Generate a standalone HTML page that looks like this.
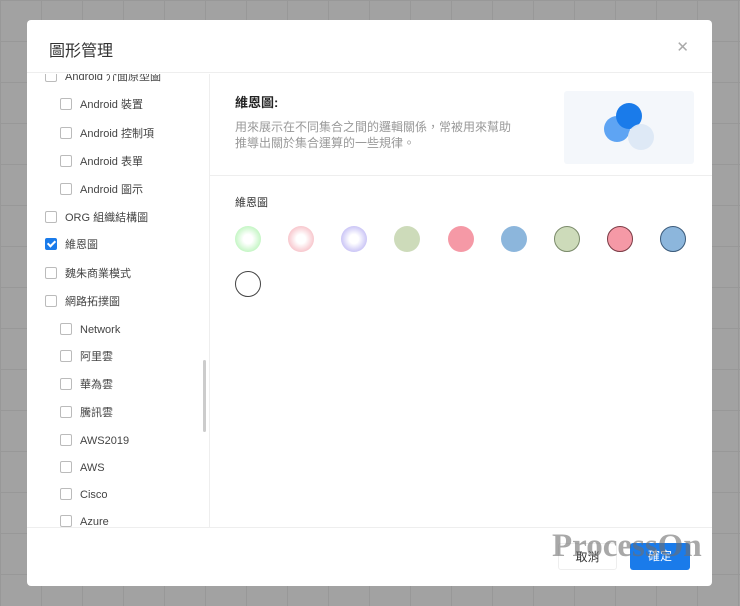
<!DOCTYPE html>
<html><head><meta charset="utf-8"><style>
*{margin:0;padding:0;box-sizing:border-box}
body{width:740px;height:606px;overflow:hidden;background:#a2a2a2;font-family:"Liberation Sans","Noto Sans CJK TC",sans-serif;position:relative;
background-image:linear-gradient(#989898 1px,transparent 1px),linear-gradient(90deg,#989898 1px,transparent 1px);background-size:41px 41px}
.dlg{position:absolute;left:27px;top:20px;width:685px;height:566px;background:#fff;border-radius:4px;overflow:hidden}
.hd{position:absolute;left:0;top:0;width:100%;height:53px;border-bottom:1px solid #eee}
.hd .t{position:absolute;left:22px;top:17px;font-size:16px;color:#333}
.hd .x{position:absolute;right:23px;top:18px;font-size:15px;color:#aaa;font-weight:300}
.left{position:absolute;left:0;top:54px;width:183px;height:453px;border-right:1px solid #eee;overflow:hidden}
.it{position:absolute;font-size:11px;color:#444;height:14px;line-height:14px;white-space:nowrap}
.it i{display:inline-block;width:12px;height:12px;border:1px solid #bbb;border-radius:2px;vertical-align:-2px;margin-right:8px;background:#fff}
.it i.on{background:#1a7bea;border-color:#1a7bea;position:relative}
.it i.on:after{content:"";position:absolute;left:3px;top:0px;width:3px;height:6px;border:solid #fff;border-width:0 2px 2px 0;transform:rotate(45deg)}
.sb{position:absolute;left:176px;top:286px;width:3px;height:72px;background:#ccc;border-radius:2px}
.ft{position:absolute;left:0;top:507px;width:100%;border-top:1px solid #eee;height:60px}
.c{position:absolute;width:26px;height:26px;border-radius:50%}
</style></head><body>
<div class="dlg">
<div class="hd"><div class="t">圖形管理</div><div class="x">✕</div></div>
<div class="left">
<div class="it" style="left:18px;top:-4px"><i></i>Android 介面原型圖</div>
<div class="it" style="left:33px;top:24px"><i></i>Android 裝置</div>
<div class="it" style="left:33px;top:53px"><i></i>Android 控制項</div>
<div class="it" style="left:33px;top:81px"><i></i>Android 表單</div>
<div class="it" style="left:33px;top:109px"><i></i>Android 圖示</div>
<div class="it" style="left:18px;top:137px"><i></i>ORG 組織結構圖</div>
<div class="it" style="left:18px;top:164px"><i class="on"></i>維恩圖</div>
<div class="it" style="left:18px;top:193px"><i></i>魏朱商業模式</div>
<div class="it" style="left:18px;top:221px"><i></i>網路拓撲圖</div>
<div class="it" style="left:33px;top:249px"><i></i>Network</div>
<div class="it" style="left:33px;top:276px"><i></i>阿里雲</div>
<div class="it" style="left:33px;top:304px"><i></i>華為雲</div>
<div class="it" style="left:33px;top:332px"><i></i>騰訊雲</div>
<div class="it" style="left:33px;top:360px"><i></i>AWS2019</div>
<div class="it" style="left:33px;top:387px"><i></i>AWS</div>
<div class="it" style="left:33px;top:414px"><i></i>Cisco</div>
<div class="it" style="left:33px;top:441px"><i></i>Azure</div>
<div class="sb"></div>
</div>
<div style="position:absolute;left:208px;top:72px;font-size:13px;font-weight:bold;color:#222">維恩圖:</div>
<div style="position:absolute;left:208px;top:99px;font-size:12px;line-height:16px;color:#999;width:320px">用來展示在不同集合之間的邏輯關係，常被用來幫助<br>推導出關於集合運算的一些規律。</div>
<div style="position:absolute;left:537px;top:71px;width:130px;height:73px;background:#f4f7fb;border-radius:3px">
<div class="c" style="left:40px;top:25px;background:#5ea4f3"></div>
<div class="c" style="left:52px;top:12px;background:#1a7bea"></div>
<div class="c" style="left:64px;top:33px;background:#dce8f5;opacity:.95"></div>
</div>
<div style="position:absolute;left:183px;top:155px;width:502px;border-top:1px solid #eee"></div>
<div style="position:absolute;left:208px;top:174px;font-size:11px;color:#333">維恩圖</div>
<div class="c" style="left:208px;top:206px;background:radial-gradient(circle,#fff 25%,#9ff09f 100%)"></div>
<div class="c" style="left:261px;top:206px;background:radial-gradient(circle,#fff 25%,#f3a3ad 100%)"></div>
<div class="c" style="left:314px;top:206px;background:radial-gradient(circle,#fff 25%,#a9a0f0 100%)"></div>
<div class="c" style="left:367px;top:206px;background:#cddbba"></div>
<div class="c" style="left:421px;top:206px;background:#f599a6"></div>
<div class="c" style="left:474px;top:206px;background:#8cb6dc"></div>
<div class="c" style="left:527px;top:206px;background:#cddbba;border:1px solid #7a8a6a"></div>
<div class="c" style="left:580px;top:206px;background:#f599a6;border:1px solid #7a3a44"></div>
<div class="c" style="left:633px;top:206px;background:#8cb6dc;border:1px solid #3a5a7a"></div>
<div class="c" style="left:208px;top:251px;border:1.5px solid #444"></div>
<div class="ft"></div>
<div style="position:absolute;left:531px;top:523px;width:59px;height:27px;border:1px solid #eee;border-radius:3px;font-size:12px;color:#333;text-align:center;line-height:26px">取消</div>
<div style="position:absolute;left:603px;top:523px;width:60px;height:27px;background:#1a7bea;border-radius:3px;font-size:12px;color:#fff;text-align:center;line-height:27px">確定</div>
<div style="position:absolute;left:525px;top:508px;font-family:'Liberation Serif',serif;font-size:33px;font-weight:bold;color:rgba(110,110,110,.6)">ProcessOn</div>
</div>
</body></html>
